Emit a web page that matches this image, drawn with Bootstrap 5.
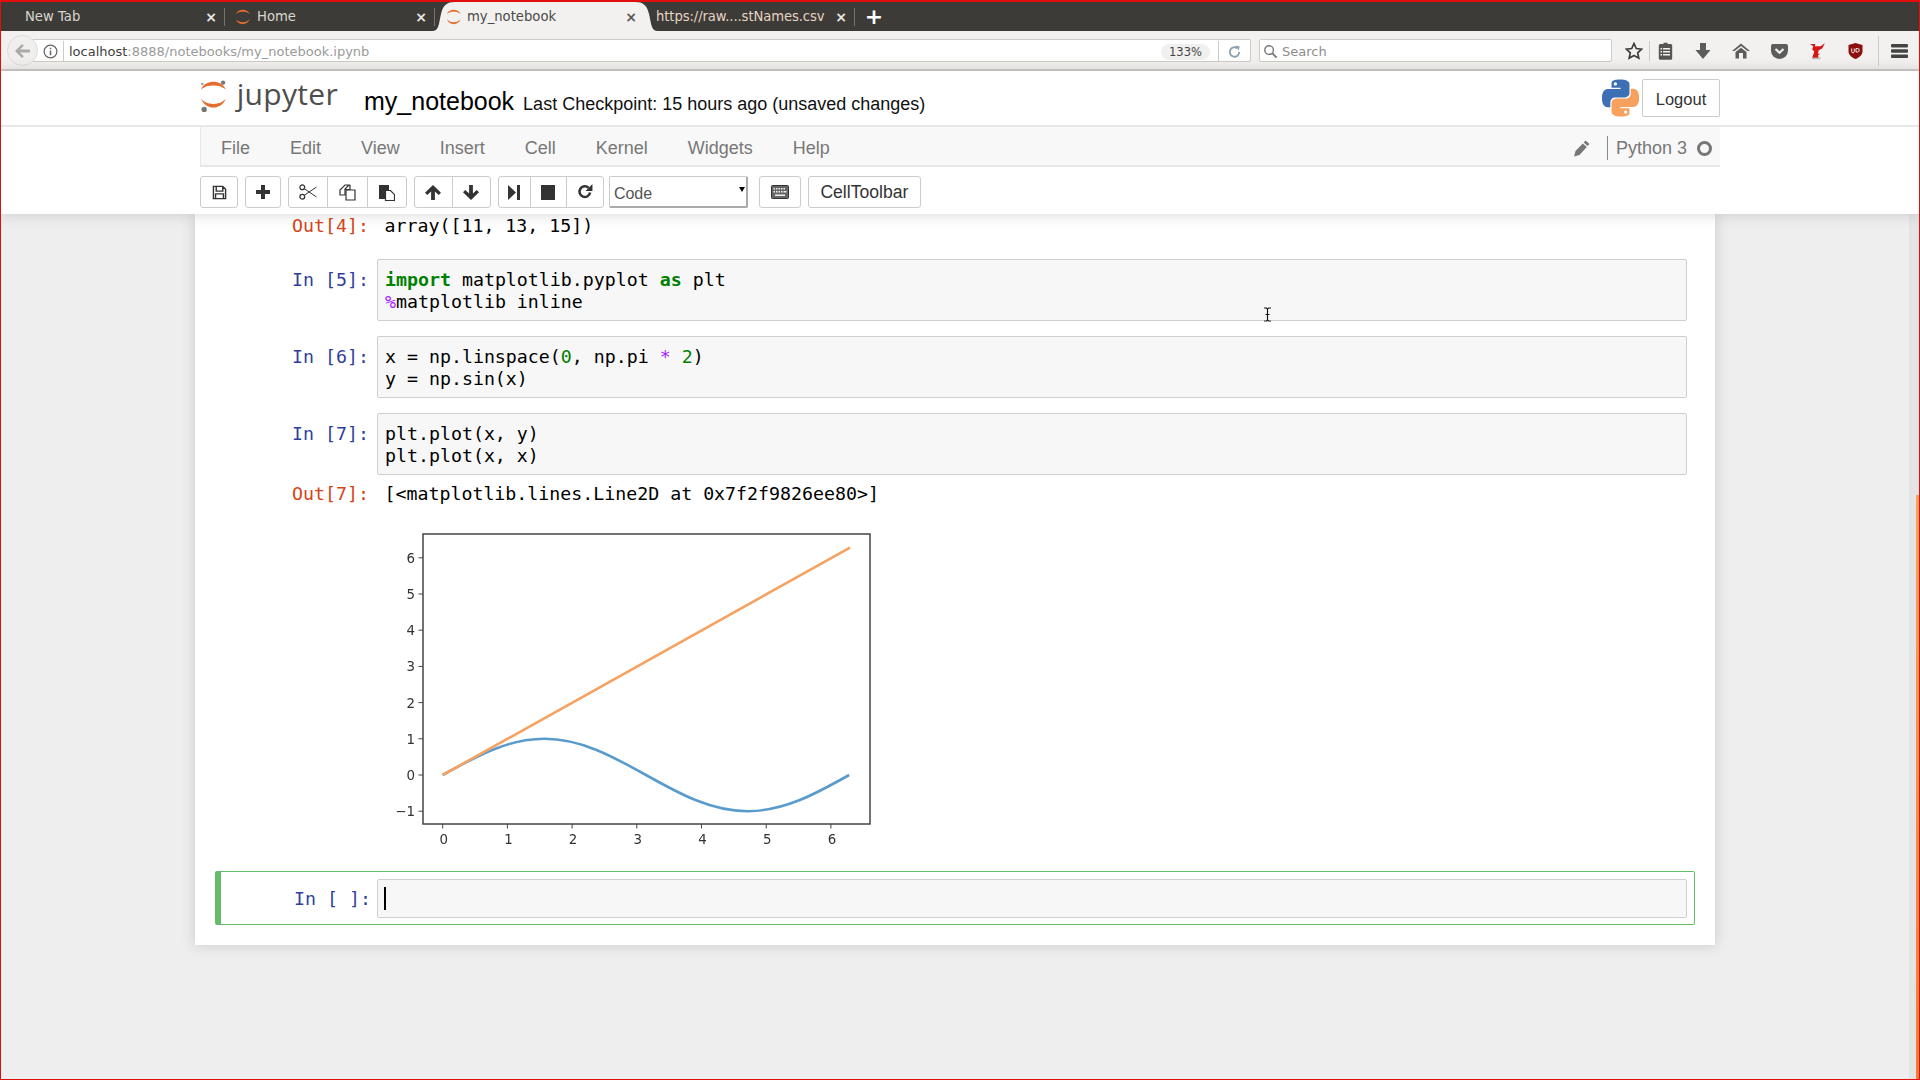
<!DOCTYPE html>
<html lang="en">
<head>
<meta charset="utf-8">
<title>my_notebook</title>
<link rel="stylesheet" href="https://cdn.jsdelivr.net/npm/bootstrap@5.3.0/dist/css/bootstrap.min.css">
<style>
html,body{height:100%;overflow:hidden}
body{background:#eee;font-family:"Liberation Sans",Arial,sans-serif;color:#000}
.frame{height:1080px;border:1px solid #e30d0d;border-top-width:2px;box-sizing:border-box}
.tabstrip{height:29px;background:#3c3b37;font:13.2px "DejaVu Sans",sans-serif;color:#d9d6d0;flex:none}
.btab{width:210px;height:29px;padding:0 4px 0 0;position:relative}
.btab .ttl{flex:1;white-space:nowrap;overflow:hidden}
.btab .xx{font-size:14px;font-weight:700;color:#e8e6e3;width:20px;text-align:center;line-height:1}
.btab.first{width:224px;padding-left:24px}
.btab.sep::after{content:"";position:absolute;right:0;top:6px;bottom:5px;width:1px;background:#77746e}
.btab.home{width:210px;padding-left:10px}
.btab.home .tabicon{margin-right:6px}
.btab.act{width:224px;margin:0 -2px;background:#f2f1ef;color:#4a4a48;padding-left:13px;padding-right:16px;clip-path:path("M0 29C6 29 6 20 8 12C10 3 14 0 22 0H202C210 0 214 3 216 12C218 20 218 29 224 29Z")}
.btab.act .xx{color:#5a5a58}
.btab.raw{width:200px;padding-left:1px}
.btab.raw .ttl{color:#e5d3c4;letter-spacing:-.1px}
.tabicon{margin-right:5px;flex:none}
.plus-tab{width:38px;color:#fff;font-size:22px;font-weight:700;line-height:1;text-align:center}
.navtool{height:40px;background:#f2f1ef;border-bottom:2px solid #cfcbc6;flex:none;font:13px "DejaVu Sans",sans-serif;padding:1px 0 0 6px}
.backb{width:31px;height:31px;border-radius:50%;background:#f0efed;border:1px solid #e0dcd6;flex:none;margin-right:-7px;position:relative;z-index:1}
.urlbar{width:1220px;height:23px;background:#fff;border:1px solid #cfcbc6;border-radius:0 2px 2px 0;color:#9a9a98;padding:2px 0 0 11px;flex:none}
.urlbar b{font-weight:400;color:#3d3d3b}
.infoic{margin-right:5px;flex:none}
.urldiv{margin-right:5px}
.dvd{width:1px;height:20px;background:#cfcbc6;flex:none}
.urlbar .dvd{margin-top:-2px}
.zoompill{width:49px;height:16px;background:#f0f0ef;border-radius:8px;font-size:11.5px;color:#444;text-align:center;line-height:16px}
.searchb{width:353px;height:23px;background:#fff;border:1px solid #cfcbc6;border-radius:2px;color:#8d8d8b;margin-left:8px;padding:2px 0 0 3px;flex:none}
.tb-icons{flex:1;min-width:0;padding:1px 0 0 7px}
.ticon{width:38px;flex:none;text-align:center;line-height:0}
.ticon.nar{width:30px}
.ticon.wid{width:41px}
.dvd.tall{height:30px}
.appwrap{flex:1;min-height:0}
.hdr{background:#fff;box-shadow:0 0 12px 1px rgba(87,87,87,.22);position:relative;z-index:2;flex:none}
.hdr-inner{width:1520px;margin:0 auto}
.toprow{height:54px;padding-top:8px}
.jlogo{width:138px;flex:none}
.jword{font-family:"Open Sans",sans-serif;font-size:30px;color:#4e4e4e;line-height:1;margin-left:9px;margin-top:-6px;letter-spacing:.3px}
.nbname{font-size:25px;margin-left:26px;line-height:1;margin-top:10px}
.chk{font-size:18px;margin-left:9px;margin-top:12px;color:#111}
.logout{width:78px;height:38px;border:1px solid #ccc;background:#fff;font-size:16.5px;color:#333;border-radius:2px;margin-left:3px;padding:2px 0 0}
.hline{height:2px;background:#e7e7e7}
.menubar{height:40px;background:#f8f8f8;border:1px solid #e7e7e7;border-width:0 0 2px 1px;font-size:18px;color:#777}
.menubar .nav-link{color:#777;padding:0 20px;line-height:42px}
.kern{font-size:18px;color:#777;height:38px;padding:4px 8px 0 0}
.ktrack{width:1px;height:24px;background:#888;margin:0 8px 0 17px}
.kcirc{width:15px;height:15px;border:3px solid #777;border-radius:50%;margin-left:10px}
.maintool{height:47px;padding-top:9px;gap:7px}
.nbtn{height:32px;padding:0;border:1px solid #ccc;background:#fff;border-radius:3px;color:#333;display:flex;align-items:center;justify-content:center;line-height:0}
.btn-group .nbtn:hover,.nbtn:hover{background:#fff;border-color:#ccc}
.w37{width:38px}.w36{width:36px}.w39{width:40.3px}.w38{width:39px}.wrun{width:33px}.wstop{width:37px}.wrst{width:38px}
.cellsel{width:139px;height:32px;border:1px solid #ccc;border-right:2px solid #aaa;border-bottom:2px solid #aaa;border-radius:2px;background:#fff url("data:image/svg+xml,%3Csvg xmlns='http://www.w3.org/2000/svg' width='6' height='6'%3E%3Cpath d='M0 1h6L3 6z' fill='%23000'/%3E%3C/svg%3E") no-repeat right 1px top 9px;appearance:none;padding:5px 4px 0;font-size:16px;color:#555;margin-left:-2px;font-family:inherit}
.kbbtn{margin-left:4px;width:42px}
.ctb{width:113px;font-size:17.6px;color:#333;line-height:1;padding-top:1px}
.site{flex:1;min-height:0;overflow:hidden}
.scrollarea{flex:1;min-width:0;overflow:hidden}
.nbpage{width:1520px;margin:0 auto;background:#fff;box-shadow:0 0 12px 1px rgba(87,87,87,.2);padding:0 20px 20px;font:18.25px/22px "DejaVu Sans Mono",monospace;height:731px}
.sbar{width:10px;background:#e4e4e4;flex:none;padding-top:281px;padding-left:7px}
.sthumb{height:100%;background:linear-gradient(#f5a160,#ee7b38)}
.nrow{padding:0 8px}
.prm{width:154px;flex:none;text-align:right;padding:10px 8px 0 0;white-space:pre}
.pin{color:#303f9f}
.pout{color:#d84315}
.codebox{flex:1;min-width:0;height:62px;background:#f7f7f7;border:1px solid #cfcfcf;border-radius:2px;padding:9px 7px 7px;white-space:pre;position:relative}
.outtext{padding:1px 0 0 7.5px;white-space:pre}
.kw{color:#008000;font-weight:700}.mg{color:#aa22ff}.nm{color:#008000}
.gap22{margin-bottom:22px}.gap15{margin-bottom:15px}.gap7{margin-bottom:7px}
.outrow .prm{padding-top:1px}
.plotwrap{padding-left:170px;margin:5px 0 21px;line-height:0}
.plotsvg{filter:blur(.35px)}
.plotwrap text{font-family:"DejaVu Sans",sans-serif;font-size:13.4px;fill:#333}
.activecell{height:54px;border:1px solid #66bb6a;border-left:6px solid #66bb6a;border-radius:2px;padding:7px 7px 0 0;margin:0}
.activecell .prm{width:156px;padding-top:9px;padding-right:6px}
.activecell .codebox{height:39px;padding:7px 6px 0;line-height:22px}
.caretbar{display:block;width:1.5px;height:23px;background:#000}
.ibeam{position:absolute;left:885px;top:47px;line-height:0}
</style>
</head>
<body>
<svg width="0" height="0" class="d-block" aria-hidden="true"><defs>
<symbol id="jp" viewBox="0 0 30 35"><path fill="#e46e2e" d="M1 10C4 3.5 9 1.5 14.5 1.5S25 3.5 28 10C24 6.5 20 5.5 14.5 5.5S5 6.5 1 10zM1 20C4 26.5 9 29.5 14.5 29.5S25 26.5 28 20C24 24 20 25.500 14.500 25.500S5 24 1 20z"/></symbol>
</defs></svg>
<div class="frame d-flex flex-column">
  <div class="tabstrip d-flex align-items-center">
    <div class="btab first sep d-flex align-items-center"><span class="ttl">New Tab</span><span class="xx">×</span></div>
    <div class="btab home sep d-flex align-items-center"><svg width="16" height="16" class="tabicon" viewBox="0 0 30 31"><use href="#jp" width="30" height="35"/></svg><span class="ttl">Home</span><span class="xx">×</span></div>
    <div class="btab act d-flex align-items-center"><svg width="16" height="16" class="tabicon" viewBox="0 0 30 31"><use href="#jp" width="30" height="35"/></svg><span class="ttl">my_notebook</span><span class="xx">×</span></div>
    <div class="btab raw sep d-flex align-items-center"><span class="ttl">https://raw....stNames.csv</span><span class="xx">×</span></div>
    <div class="plus-tab">+</div>
  </div>
  <div class="navtool d-flex align-items-center">
    <div class="backb d-flex align-items-center justify-content-center"><svg width="16" height="14" viewBox="0 0 16 14"><path d="M7 0L0 7l7 7 1.800-1.800L5 8.400h10V5.600H5l3.800-3.800z" fill="#aaa"/></svg></div>
    <div class="urlbar d-flex align-items-center">
      <svg width="15" height="15" viewBox="0 0 16 16" class="infoic"><circle cx="8" cy="8" r="6.800" fill="none" stroke="#666" stroke-width="1.300"/><path d="M7.200 7h1.600v5H7.200zM7.200 4h1.600v1.700H7.200z" fill="#666"/></svg>
      <span class="dvd urldiv"></span><span><b>localhost</b>:8888/notebooks/my_notebook.ipynb</span>
      <span class="flex-grow-1"></span><span class="zoompill">133%</span><span class="dvd ms-2 me-2"></span>
      <svg width="15" height="16" viewBox="0 0 16 16" class="me-2"><path d="M13 8a5 5 0 1 1-2-4" fill="none" stroke="#8aa0b0" stroke-width="2"/><path d="M9 1l4.500 1-1 4.500z" fill="#8aa0b0"/></svg>
    </div>
    <div class="searchb d-flex align-items-center"><svg width="15" height="15" viewBox="0 0 16 16" class="me-1"><circle cx="6.500" cy="6.500" r="4.600" fill="none" stroke="#777" stroke-width="1.500"/><path d="M10 10l4.500 4.500" stroke="#777" stroke-width="2"/></svg><span>Search</span></div>
    <div class="d-flex align-items-center tb-icons">
      <div class="ticon nar"><svg width="18" height="18" viewBox="0 0 18 18"><path d="M9 1.500l2.300 5 5.400.6-4 3.700 1.100 5.400L9 13.500l-4.800 2.700 1.100-5.400-4-3.700 5.400-.6z" fill="none" stroke="#3d3d3b" stroke-width="1.700"/></svg></div>
      <span class="dvd"></span>
      <div class="ticon nar"><svg width="15" height="18" viewBox="0 0 15 18"><path d="M5.500 2V.8h4V2h3.200a1.500 1.500 0 0 1 1.500 1.500v12.700a1.500 1.500 0 0 1-1.500 1.500H2.300a1.500 1.500 0 0 1-1.500-1.500V3.500A1.500 1.500 0 0 1 2.300 2z" fill="#555"/><path d="M5 6h7v1.400H5zM5 9h7v1.400H5zM5 12h7v1.400H5zM2.500 6h1.500v1.400H2.500zM2.500 9h1.500v1.400H2.500zM2.500 12h1.500v1.400H2.500z" fill="#f2f1ef"/></svg></div>
      <div class="ticon ms-1"><svg width="16" height="16" viewBox="0 0 16 16"><path d="M5 0h6v7h4.500L8 16 .5 7H5z" fill="#5c5c5a"/></svg></div>
      <div class="ticon"><svg width="18" height="16" viewBox="0 0 18 16"><path d="M9 .5L18 8h-2.500L9 3 2.500 8H0zM3.500 9L9 4.700 14.500 9v6.500H11V10H7v5.500H3.500z" fill="#5c5c5a"/></svg></div>
      <div class="ticon"><svg width="17" height="15" viewBox="0 0 17 15"><path d="M2 0h13a2 2 0 0 1 2 2v4.500a8.500 8.500 0 0 1-17 0V2a2 2 0 0 1 2-2z" fill="#5c5c5a"/><path d="M4.500 5l4 3.800 4-3.800" fill="none" stroke="#f2f1ef" stroke-width="2.200"/></svg></div>
      <div class="ticon"><svg width="17" height="17" viewBox="0 0 16 16"><path d="M1 1h5l-.5 2L11 3l4-3-2.500 5L9 7l-.5 3 2 0-2 1.500L9 14H3l2-6-2-2 1-3z" fill="#d41616"/><path d="M3 14.500h8" stroke="#bbb" stroke-width="1.500"/></svg></div>
      <div class="ticon"><svg width="15" height="16" viewBox="0 0 15 16"><path d="M7.500 0l7 2v6.500c0 3.500-3.500 6-7 7.500-3.500-1.500-7-4-7-7.500V2z" fill="#8c1010"/><path d="M3.700 5.500v3a1.300 1.300 0 0 0 2.600 0v-3M8 5.500h1.500a1.500 1.500 0 0 1 0 3.500H8z" fill="none" stroke="#fff" stroke-width=".9"/></svg></div>
      <span class="dvd tall ms-1"></span>
      <div class="ticon wid"><svg width="17" height="14" viewBox="0 0 17 14"><path d="M1 0h15a1 1 0 0 1 1 1v1.500a1 1 0 0 1-1 1H1a1 1 0 0 1-1-1V1a1 1 0 0 1 1-1zM1 5.200h15a1 1 0 0 1 1 1v1.500a1 1 0 0 1-1 1H1a1 1 0 0 1-1-1V6.200a1 1 0 0 1 1-1zM1 10.500h15a1 1 0 0 1 1 1V13a1 1 0 0 1-1 1H1a1 1 0 0 1-1-1v-1.500a1 1 0 0 1 1-1z" fill="#444"/></svg></div>
    </div>
  </div>
  <div class="appwrap d-flex flex-column">
    <div class="hdr">
      <div class="hdr-inner">
        <div class="toprow d-flex align-items-start">
          <div class="jlogo d-flex align-items-center">
            <svg width="30" height="35" viewBox="0 0 30 35"><use href="#jp" width="30" height="35"/><circle cx="25" cy="2.500" r="2.300" fill="#767677"/><circle cx="2.500" cy="4" r="1.400" fill="#9e9e9e"/><circle cx="4.500" cy="31.500" r="2.900" fill="#767677"/></svg>
            <span class="jword">jupyter</span>
          </div>
          <span class="nbname">my_notebook</span>
          <span class="chk">Last Checkpoint: 15 hours ago (unsaved changes)</span>
          <span class="flex-grow-1"></span>
          <svg width="37" height="38" viewBox="0 0 24 24"><path fill="#3c6fb4" d="M14.250.18l.9.2.730.26.590.3.450.32.340.34.250.34.160.33.100.3.040.26.020.2-.010.13V8.500l-.050.630-.130.550-.210.460-.260.380-.300.310-.330.250-.350.190-.350.140-.330.100-.300.070-.260.040-.210.020H8.770l-.690.050-.590.140-.500.220-.410.270-.330.320-.270.350-.200.360-.150.370-.100.350-.070.320-.040.270-.020.210v3.060H3.170l-.210-.030-.280-.070-.320-.120-.350-.180-.360-.260-.360-.360-.350-.460-.320-.590-.280-.730-.210-.880-.140-1.050-.050-1.230.060-1.220.160-1.040.240-.870.320-.710.360-.570.400-.440.420-.33.420-.24.400-.16.360-.100.320-.050.240-.010h.160l.060.010h8.160v-.830H6.180l-.010-2.750-.020-.370.050-.340.110-.310.170-.280.250-.26.310-.23.380-.200.440-.180.510-.15.580-.12.64-.100.710-.06.770-.04.840-.02 1.270.05zm-6.300 1.980l-.230.33-.080.41.080.41.230.34.330.22.410.09.410-.09.33-.22.230-.34.080-.41-.08-.41-.23-.33-.33-.22-.41-.09-.41.09z"/><path fill="#f7a15e" d="M21.040 6.110l.28.06.32.12.35.18.36.27.36.35.35.47.32.59.28.73.21.88.14 1.04.05 1.23-.06 1.23-.16 1.04-.24.86-.32.71-.36.57-.40.45-.42.33-.42.24-.40.16-.36.09-.32.05-.24.02-.16-.01h-8.220v.82h5.840l.01 2.760.02.36-.05.34-.11.31-.17.29-.25.25-.31.24-.38.20-.44.17-.51.15-.58.13-.64.09-.71.07-.77.04-.84.01-1.270-.04-1.07-.14-.90-.20-.73-.25-.59-.30-.45-.33-.34-.34-.25-.34-.16-.33-.10-.30-.04-.25-.02-.20.01-.13v-5.340l.05-.64.13-.54.21-.46.26-.38.30-.32.33-.24.35-.20.35-.14.33-.10.30-.06.26-.04.21-.02.13-.01h5.840l.69-.05.59-.14.50-.21.41-.28.33-.32.27-.35.20-.36.15-.36.10-.35.07-.32.04-.28.02-.21V6.070h2.090l.14.01zm-6.470 14.250l-.23.33-.08.41.08.41.23.33.33.23.41.08.41-.08.33-.23.23-.33.08-.41-.08-.41-.23-.33-.33-.23-.41-.08-.41.08z"/></svg>
          <button class="logout" type="button">Logout</button>
        </div>
      </div>
      <div class="hline"></div>
      <div class="hdr-inner">
        <div class="menubar d-flex align-items-start">
          <ul class="nav flex-grow-1">
            <li class="nav-item"><a class="nav-link" href="#">File</a></li>
            <li class="nav-item"><a class="nav-link" href="#">Edit</a></li>
            <li class="nav-item"><a class="nav-link" href="#">View</a></li>
            <li class="nav-item"><a class="nav-link" href="#">Insert</a></li>
            <li class="nav-item"><a class="nav-link" href="#">Cell</a></li>
            <li class="nav-item"><a class="nav-link" href="#">Kernel</a></li>
            <li class="nav-item"><a class="nav-link" href="#">Widgets</a></li>
            <li class="nav-item"><a class="nav-link" href="#">Help</a></li>
          </ul>
          <div class="kern d-flex align-items-center">
            <svg width="16" height="17" viewBox="0 0 16 17"><path d="M11.500.5l4 3.500-1.800 2-4-3.500zM8.800 3.500l4 3.500L5.500 15 0 16.500 1.500 11z" fill="#777"/></svg>
            <span class="ktrack"></span><span>Python 3</span><span class="kcirc"></span>
          </div>
        </div>
        <div class="maintool d-flex align-items-start">
          <button class="btn nbtn w37" type="button" aria-label="save"><svg width="15" height="15" viewBox="0 0 16 16"><path d="M1.500 1.500h10l3 3v10h-13z M4.500 1.500v5h7v-5 M3.800 14.500v-5h8.400v5" fill="none" stroke="#333" stroke-width="1.500"/></svg></button>
          <button class="btn nbtn w36" type="button" aria-label="add"><svg width="14" height="14" viewBox="0 0 14 14"><path d="M5 0h4v5h5v4H9v5H5V9H0V5h5z" fill="#333"/></svg></button>
          <div class="btn-group">
            <button class="btn nbtn w39" type="button" aria-label="cut"><svg width="18" height="16" viewBox="0 0 18 16"><circle cx="3.300" cy="3.300" r="2.400" fill="none" stroke="#333" stroke-width="1.300"/><circle cx="3.300" cy="12.700" r="2.400" fill="none" stroke="#333" stroke-width="1.300"/><path d="M5.300 4.700L17.500 13M5.300 11.300L17.500 3" stroke="#333" fill="none" stroke-width="1"/></svg></button>
            <button class="btn nbtn w39" type="button" aria-label="copy"><svg width="17" height="17" viewBox="0 0 17 17"><path d="M6 1h4L6 5v6H1V6zM6 5.500h5v-4.500" fill="#fff" stroke="#333" stroke-width="1.200"/><path d="M7 6h9v10H7z" fill="#fff" stroke="#333" stroke-width="1.200"/></svg></button>
            <button class="btn nbtn w39" type="button" aria-label="paste"><svg width="17" height="17" viewBox="0 0 17 17"><path d="M1 1h10v5H7v9H1z" fill="#333"/><path d="M7.500 6.500h5l4 4v6h-9z" fill="#fff" stroke="#333" stroke-width="1.200"/></svg></button>
          </div>
          <div class="btn-group">
            <button class="btn nbtn w38" type="button" aria-label="up"><svg width="16" height="15" viewBox="0 0 16 15"><path d="M8 0l8 7.800-2.300 2.300-3.800-3.700V15H6.100V6.400L2.300 10.100 0 7.800z" fill="#333"/></svg></button>
            <button class="btn nbtn w38" type="button" aria-label="down"><svg width="16" height="15" viewBox="0 0 16 15"><path d="M8 15l8-7.800-2.300-2.300-3.800 3.700V0H6.100v8.600L2.300 4.900 0 7.200z" fill="#333"/></svg></button>
          </div>
          <div class="btn-group">
            <button class="btn nbtn wrun" type="button" aria-label="run"><svg width="12" height="15" viewBox="0 0 12 15"><path d="M0 0l8 7.500-8 7.500zM9 0h3v15H9z" fill="#333"/></svg></button>
            <button class="btn nbtn wstop" type="button" aria-label="stop"><svg width="14" height="15" viewBox="0 0 14 15"><path d="M0 0h14v15H0z" fill="#333"/></svg></button>
            <button class="btn nbtn wrst" type="button" aria-label="restart"><svg width="16" height="16" viewBox="0 0 15 15"><path d="M12.300 8a5 5 0 1 1-1.500-4.500" fill="none" stroke="#333" stroke-width="2.400"/><path d="M14.500 0v6.500H8z" fill="#333"/></svg></button>
          </div>
          <select class="cellsel" aria-label="cell type"><option>Code</option></select>
          <button class="btn nbtn kbbtn" type="button" aria-label="keyboard"><svg width="18" height="14" viewBox="0 0 18 14"><rect x=".5" y=".5" width="17" height="13" rx="1" fill="#666" stroke="#333"/><path d="M2.500 3h1.500v1.500H2.500zM5 3h1.500v1.500H5zM7.500 3H9v1.500H7.500zM10 3h1.500v1.500H10zM12.500 3H14v1.500h-1.500zM2.500 6h1.500v1.500H2.500zM5 6h1.500v1.500H5zM7.500 6H9v1.500H7.500zM10 6h1.500v1.500H10zM12.500 6h3v1.500h-3zM4 9.500h10V11H4z" fill="#eee"/></svg></button>
          <button class="btn nbtn ctb" type="button">CellToolbar</button>
        </div>
      </div>
    </div>
    <div class="site d-flex">
      <div class="scrollarea">
        <div class="nbpage">
          <div class="nrow outrow d-flex gap22"><div class="prm pout">Out[4]:</div><div class="outtext">array([11, 13, 15])</div></div>
          <div class="nrow d-flex gap15"><div class="prm pin">In [5]:</div><div class="codebox"><span class="kw">import</span> matplotlib.pyplot <span class="kw">as</span> plt
<span class="mg">%</span>matplotlib inline<span class="ibeam"><svg width="9" height="15" viewBox="0 0 9 15"><path d="M1 1h2.500l1 1 1-1H8M4.500 2v11M1 14h2.500l1-1 1 1H8M2.500 7.500h4" fill="none" stroke="#fff" stroke-width="2.600"/><path d="M1 1h2.500l1 1 1-1H8M4.500 2v11M1 14h2.500l1-1 1 1H8M2.500 7.500h4" fill="none" stroke="#111" stroke-width="1.200"/></svg></span></div></div>
          <div class="nrow d-flex gap15"><div class="prm pin">In [6]:</div><div class="codebox">x = np.linspace(<span class="nm">0</span>, np.pi <span class="mg">*</span> <span class="nm">2</span>)
y = np.sin(x)</div></div>
          <div class="nrow d-flex gap7"><div class="prm pin">In [7]:</div><div class="codebox">plt.plot(x, y)
plt.plot(x, x)</div></div>
          <div class="nrow outrow d-flex"><div class="prm pout">Out[7]:</div><div class="outtext">[&lt;matplotlib.lines.Line2D at 0x7f2f9826ee80&gt;]</div></div>
          <div class="plotwrap">
            <svg class="plotsvg" width="500" height="340" viewBox="0 0 500 340">
              <path d="M57.700 265C90.850 246.450 122.550 228.800 159.330 228.800S227.800 246.450 260.960 265 325.800 301.200 362.600 301.200 431.100 283.550 464.200 265" fill="none" stroke="#5a9bce" stroke-width="2.600"/>
              <path d="M57.700 265L465 37.600" fill="none" stroke="#f5a262" stroke-width="2.600"/>
              <rect x="38" y="24" width="447" height="290" fill="none" stroke="#444" stroke-width="1.500"/>
              <path d="M57.700 314v4.500M122.400 314v4.500M187.100 314v4.500M251.800 314v4.500M316.500 314v4.500M381.200 314v4.500M445.900 314v4.500M38 301.200h-4.500M38 265h-4.500M38 228.800h-4.500M38 192.600h-4.500M38 156.400h-4.500M38 120.200h-4.500M38 84h-4.500M38 47.800h-4.500" stroke="#444" stroke-width="1" fill="none"/>
              <g text-anchor="middle"><text x="58.700" y="334">0</text><text x="123.400" y="334">1</text><text x="188.100" y="334">2</text><text x="252.800" y="334">3</text><text x="317.500" y="334">4</text><text x="382.200" y="334">5</text><text x="446.900" y="334">6</text></g>
              <g text-anchor="end"><text x="30" y="306">−1</text><text x="30" y="270">0</text><text x="30" y="233.500">1</text><text x="30" y="197.500">2</text><text x="30" y="161">3</text><text x="30" y="125">4</text><text x="30" y="89">5</text><text x="30" y="52.500">6</text></g>
            </svg>
          </div>
          <div class="activecell d-flex"><div class="prm pin">In [ ]:</div><div class="codebox"><span class="caretbar"></span></div></div>
        </div>
      </div>
      <div class="sbar"><div class="sthumb"></div></div>
    </div>
  </div>
</div>
<script src="https://cdn.jsdelivr.net/npm/bootstrap@5.3.0/dist/js/bootstrap.bundle.min.js"></script>
</body>
</html>
